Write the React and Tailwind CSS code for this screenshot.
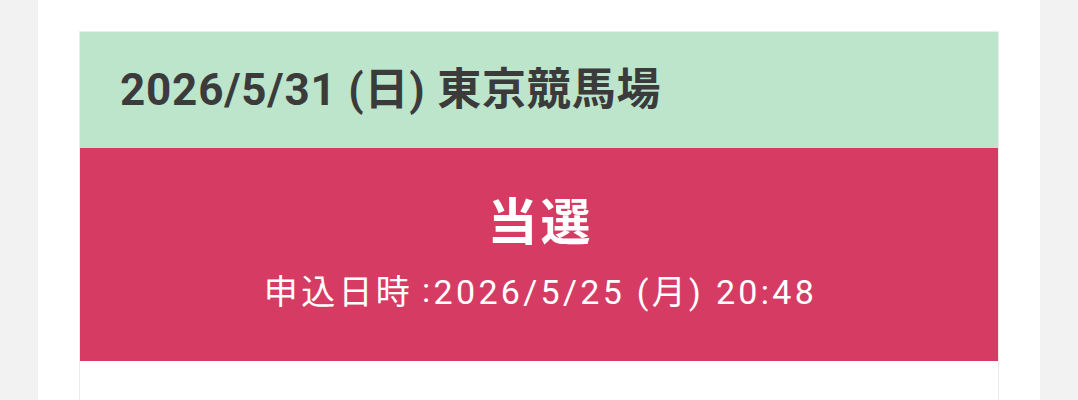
export default function App() {
  const font = { fontFamily: 'Roboto, "Noto Sans CJK JP", sans-serif' };
  return (
    <div className="flex h-[400px] w-[1078px] justify-center overflow-hidden bg-[#f2f2f2]" style={font}>
      <div className="h-full w-[1002px] bg-white pl-[41px] pt-[31px]">
        <div className="w-[920px] border border-[#ececec]">
          <div className="flex h-[116px] items-center bg-[#bce5cb] pl-[40px]">
            <span className="text-[44px] font-bold leading-none tracking-[0.8px] text-[#3b3b3b]">
              2026/5/31 (日) 東京競馬場
            </span>
          </div>
          <div className="flex h-[213px] flex-col items-center bg-[#d63c63] pt-[45px] text-white">
            <div className="pl-[3px] text-[50px] font-bold leading-[60px] tracking-[3px]">当選</div>
            <div className="mt-[17px] pl-[3px] text-[34px] leading-[44px] tracking-[3.3px]">
              申込日時<span className="relative -top-[2px] ml-[9px]">:</span>2026/5/25 (月) 20:48
            </div>
          </div>
          <div className="h-[60px] bg-white"></div>
        </div>
      </div>
    </div>
  );
}
